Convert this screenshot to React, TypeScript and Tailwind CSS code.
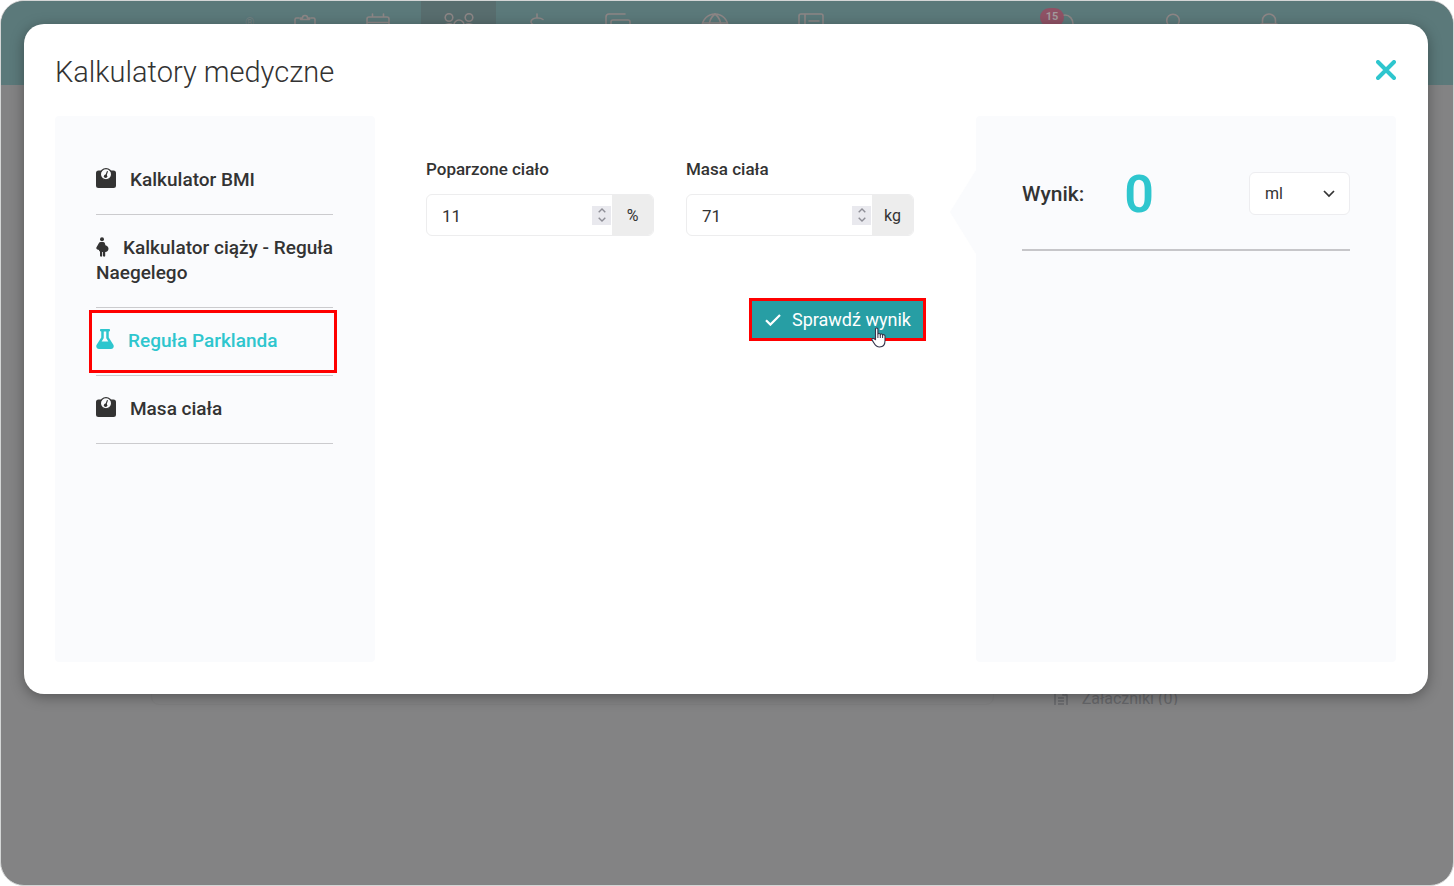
import { useState } from "react";
import type { ReactNode } from "react";
import { FaFlask } from "react-icons/fa";

type Calculator = {
  id: string;
  label: string;
  icon: ReactNode;
};

function ScaleIcon() {
  return (
    <svg viewBox="0 0 20 20" className="mr-[14px] inline size-5 align-[-2px]" aria-hidden="true">
      <path d="M2.500 2.500h15A2.500 2.500 0 0 1 20 5v12.500a2.500 2.500 0 0 1-2.500 2.500h-15A2.500 2.500 0 0 1 0 17.500V5a2.500 2.500 0 0 1 2.500-2.500z" fill="currentColor" />
      <circle cx="10" cy="6.200" r="5.600" fill="#fafbfd" stroke="currentColor" strokeWidth="1.200" />
      <path d="M9.700 8.300 11.300 3.600" stroke="currentColor" strokeWidth="1.200" strokeLinecap="round" />
      <circle cx="9.600" cy="8.300" r="1.700" fill="currentColor" />
    </svg>
  );
}

function PregnancyIcon() {
  return (
    <svg viewBox="0 0 13 20" className="mr-[14px] inline h-5 w-[13px] align-[-3px]" fill="currentColor" aria-hidden="true">
      <circle cx="6" cy="2.200" r="2" />
      <path d="M4.700 5h2.600c1 0 1.500.8 1.700 1.700l.4 1.500c1.700.4 3.100 1.600 3.100 3.400 0 2-1.200 3.400-3.300 3.400v3.800c0 1.200-2.200 1.200-2.200 0V15h-.8v3.800c0 1.200-2.200 1.200-2.200 0V14.500c-.7-.2-1-.8-1-1.500l-1.600-.5C.5 12.200 0 11.400.4 10.500L2.800 6.200C3.200 5.400 3.800 5 4.700 5z" />
    </svg>
  );
}

const calculators: Calculator[] = [
  { id: "bmi", label: "Kalkulator BMI", icon: <ScaleIcon /> },
  { id: "naegele", label: "Kalkulator ciąży - Reguła Naegelego", icon: <PregnancyIcon /> },
  { id: "parkland", label: "Reguła Parklanda", icon: <FaFlask className="mr-[14px] inline h-5 w-[18px] align-[-2px]" /> },
  { id: "mass", label: "Masa ciała", icon: <ScaleIcon /> },
];

function LineIcon({ children }: { children: ReactNode }) {
  return (
    <svg viewBox="0 0 28 28" className="size-7" fill="none" stroke="currentColor" strokeWidth="1.6" strokeLinecap="round" strokeLinejoin="round" aria-hidden="true">
      {children}
    </svg>
  );
}

function NavLink({ label, className, children }: { label: string; className: string; children: ReactNode }) {
  return (
    <a href="#" aria-label={label} className={`flex h-full shrink-0 justify-center pt-[11px] ${className}`}>
      {children}
    </a>
  );
}

function TopBar() {
  return (
    <header className="flex h-[84px] bg-[#5b797a] pl-[240px] text-[#8d8686]">
      <span className="w-[27px] pt-[14px] pl-1 text-xs opacity-50">®</span>
      <NavLink label="Karta" className="w-[74px]">
        <LineIcon>
          <path d="M8 6H5.500A1.500 1.500 0 0 0 4 7.500V25h20V7.500A1.500 1.500 0 0 0 22.500 6H20M9.500 7.500V6h2a2.500 2.500 0 1 1 5 0h2v1.500z" />
        </LineIcon>
      </NavLink>
      <NavLink label="Kalendarz" className="mr-[7px] w-[72px]">
        <LineIcon>
          <path d="M5 5h18a2 2 0 0 1 2 2v18H3V7a2 2 0 0 1 2-2zM3 10.500h22M8.500 2v3M19.500 2v3" />
        </LineIcon>
      </NavLink>
      <NavLink label="Pacjenci" className="w-[75px] bg-[#586d6e]">
        <svg viewBox="0 0 32 28" className="h-7 w-8" fill="none" stroke="currentColor" strokeWidth="1.6" aria-hidden="true">
          <circle cx="6" cy="5.500" r="3.800" />
          <circle cx="26" cy="5.500" r="3.800" />
          <circle cx="16" cy="13" r="5" />
          <path d="M1 14c1-2 6-3 9-1M31 14c-1-2-6-3-9-1" />
        </svg>
      </NavLink>
      <NavLink label="Finanse" className="w-[81px]">
        <LineIcon>
          <path d="M20 7.500c-3-2.500-11-2-12 2-1 5 11 4 12 9 0 4-9 5-13 2M14 2v4M14 22v4" />
        </LineIcon>
      </NavLink>
      <NavLink label="Dokumenty" className="w-[82px]">
        <LineIcon>
          <path d="M2 19V5a3 3 0 0 1 3-3h16M7 22V10a2 2 0 0 1 2-2h15a2 2 0 0 1 2 2v12zM15 13h3" />
        </LineIcon>
      </NavLink>
      <NavLink label="Strona" className="w-[112px]">
        <LineIcon>
          <circle cx="14" cy="15" r="13" />
          <path d="M2 11h24M14 2c-8 6-8 20 0 26M14 2c8 6 8 20 0 26" />
        </LineIcon>
      </NavLink>
      <NavLink label="Baza wiedzy" className="w-20">
        <LineIcon>
          <path d="M4 2h20a2 2 0 0 1 2 2v22H2V4a2 2 0 0 1 2-2zM8 2v24M12 9h10M12 14h10" />
        </LineIcon>
      </NavLink>
      <div className="ml-auto flex h-full pr-[136px]">
        <div className="relative w-[75px]">
          <NavLink label="Powiadomienia" className="w-[75px]">
            <LineIcon>
              <path d="M4 22V12a8 9 0 0 1 16 0v10z" />
            </LineIcon>
          </NavLink>
          <span className="absolute top-[7px] left-[11px] flex h-[19px] w-6 items-center justify-center rounded-full bg-[#8f5265] text-[11px] font-bold text-[#a39b9d]">
            15
          </span>
        </div>
        <NavLink label="Konto" className="ml-[21px] w-24">
          <LineIcon>
            <circle cx="14" cy="8.500" r="6.300" />
            <path d="M3 26a11 9 0 0 1 22 0" />
          </LineIcon>
        </NavLink>
        <NavLink label="Wyloguj" className="w-24">
          <LineIcon>
            <path d="M7.500 12V8.500a6.500 6.500 0 0 1 13 0V12M6 12h16v13H6z" />
          </LineIcon>
        </NavLink>
      </div>
    </header>
  );
}

function NumberField({ id, label, unit, value, onChange }: { id: string; label: string; unit: string; value: number; onChange: (value: number) => void }) {
  return (
    <div>
      <label htmlFor={id} className="block text-[17px] leading-6 font-medium">
        {label}
      </label>
      <div className="mt-[13px] flex h-[42px] items-center overflow-hidden rounded-md border border-[#ededee] bg-white">
        <input
          id={id}
          type="number"
          value={value}
          onChange={(e) => onChange(Number(e.target.value))}
          className="h-full w-0 min-w-0 grow [appearance:textfield] pt-[2px] pl-[15px] text-[17px] outline-none [&::-webkit-inner-spin-button]:appearance-none"
        />
        <div className="flex h-[19px] w-[19px] shrink-0 flex-col bg-[#e9e9ee] text-[#8e8e96]">
          <button type="button" aria-label={`${label} +`} onClick={() => onChange(value + 1)} className="flex flex-1 items-end justify-center pb-[2px]">
            <svg viewBox="0 0 8 5" className="h-[5px] w-2" fill="none" stroke="currentColor" strokeWidth="1.400"><path d="M.7 4.300 4 1l3.300 3.300" /></svg>
          </button>
          <button type="button" aria-label={`${label} -`} onClick={() => onChange(value - 1)} className="flex flex-1 items-start justify-center pt-[2px]">
            <svg viewBox="0 0 8 5" className="h-[5px] w-2" fill="none" stroke="currentColor" strokeWidth="1.400"><path d="M.7.7 4 4 7.300.7" /></svg>
          </button>
        </div>
        <span className="ml-px flex h-full w-[41px] shrink-0 items-center justify-center bg-[#ededed] pt-[2px] text-base">{unit}</span>
      </div>
    </div>
  );
}

function HandCursor() {
  return (
    <svg viewBox="0 0 16 21" className="pointer-events-none absolute top-[26px] left-[119px] h-[21px] w-4" aria-hidden="true">
      <path
        d="M4.500 12.500V2.300c0-1.700 2.400-1.700 2.400 0v4.900c.3-1.100 2.200-1 2.400.3.500-.9 2.200-.7 2.300.6.700-.8 2.400-.4 2.400 1.100v4.600c0 3.400-1.900 6.200-5.400 6.200-3.200 0-4.400-1.700-5.500-3.700L1 12.900c-.7-1.400 1-2.200 2-1.200z"
        fill="#fff"
        stroke="#33334a"
        strokeWidth="1.100"
      />
      <path d="M6.900 7v4M9.300 7.600V11M11.600 8.200V11" stroke="#33334a" strokeWidth="1" />
    </svg>
  );
}

export default function App() {
  const [active, setActive] = useState("parkland");
  const [burned, setBurned] = useState(11);
  const [mass, setMass] = useState(71);
  const [result, setResult] = useState(0);

  return (
    <div className="relative flex min-h-screen flex-col bg-white font-[Roboto,sans-serif] text-[#333]">
      <div className="flex grow flex-col overflow-hidden rounded-[24px] border border-[#d4d6d6] bg-[#838384]">
        <TopBar />
        <div className="flex h-[620px] items-end pr-[275px]">
          <div className="ml-[150px] h-10 grow rounded-lg border border-[#7f7f80]" />
          <div className="ml-[60px] flex h-[18px] items-start gap-[14px] overflow-hidden text-base text-[#67686b]">
            <svg viewBox="0 0 14 18" className="mt-[3px] h-[18px] w-[14px]" fill="none" stroke="currentColor" strokeWidth="1.500" aria-hidden="true">
              <path d="M1 17V1h8l4 4v12zM4 8h6M4 11h6M4 14h6M9 1v4h4" />
            </svg>
            Załaczniki (0)
          </div>
        </div>
      </div>

      <div role="dialog" aria-labelledby="dialog-title" className="absolute top-6 right-[26px] left-6 rounded-[20px] bg-white pr-8 pb-8 pl-[31px] shadow-[0_3px_14px_rgba(0,0,0,0.35)]">
        <div className="flex h-[92px] items-center justify-between">
          <h1 id="dialog-title" className="pt-1 text-[29px] leading-10 font-light">Kalkulatory medyczne</h1>
          <button type="button" aria-label="Zamknij" className="text-[#2ec6ce]">
            <svg viewBox="0 0 20 20" className="size-5" fill="none" stroke="currentColor" strokeWidth="4" strokeLinecap="round">
              <path d="M2 2l16 16M18 2 2 18" />
            </svg>
          </button>
        </div>

        <div className="grid min-h-[546px] grid-cols-[320px_minmax(0,1fr)_420px]">
          <nav className="rounded-sm bg-[#fafbfd] pt-[31px] pr-[42px] pl-[41px]">
            <ul>
              {calculators.map((item) => (
                <li key={item.id} className="relative border-b border-[#cbcbce]">
                  <button
                    type="button"
                    onClick={() => setActive(item.id)}
                    className={`block w-full pt-5 pb-[22px] text-left text-[19px] leading-[25px] font-medium ${item.id === active ? "text-[#2ec6ce]" : "text-[#333]"}`}
                  >
                    {item.icon}
                    {item.label}
                  </button>
                  {item.id === active && <span className="pointer-events-none absolute inset-y-[2px] -right-1 -left-[7px] border-3 border-[#ff0000]" />}
                </li>
              ))}
            </ul>
          </nav>

          <form
            className="pt-[41px] pr-[50px] pl-[51px]"
            onSubmit={(e) => {
              e.preventDefault();
              setResult(4 * burned * mass);
            }}
          >
            <div className="grid grid-cols-2 gap-8 pr-3">
              <NumberField id="burned" label="Poparzone ciało" unit="%" value={burned} onChange={setBurned} />
              <NumberField id="mass" label="Masa ciała" unit="kg" value={mass} onChange={setMass} />
            </div>
            <div className="mt-[62px] flex justify-end">
              <button type="submit" className="relative flex h-[43px] w-[177px] items-center gap-[11px] border-3 border-[#ff0000] bg-[#279ea4] pl-[13px] text-lg text-white">
                <svg viewBox="0 0 16 12" className="h-3 w-4 shrink-0" fill="none" stroke="currentColor" strokeWidth="2.200" aria-hidden="true"><path d="M1 6.200 5.400 10.600 15 1" /></svg>
                Sprawdź wynik
                <HandCursor />
              </button>
            </div>
          </form>

          <section className="relative rounded-sm bg-[#fafbfd] px-[46px] pt-14">
            <svg viewBox="0 0 26 84" className="absolute top-[54px] -left-[26px] h-[84px] w-[26px]" fill="#fafbfd" aria-hidden="true"><path d="M26 0 0 42l26 42z" /></svg>
            <div className="flex h-[79px] items-start border-b-2 border-[#c6c6c9]">
              <div className="flex h-[45px] grow items-center gap-10">
                <span className="text-[21px] font-medium">Wynik:</span>
                <output className="text-[52px] leading-none font-semibold text-[#2ec6ce]">{result}</output>
              </div>
              <div className="relative">
                <select aria-label="Jednostka" className="h-[43px] w-[101px] appearance-none rounded-md border border-[#ededf0] bg-white pl-[15px] text-base">
                  <option>ml</option>
                  <option>l</option>
                </select>
                <svg viewBox="0 0 12 8" className="pointer-events-none absolute top-[18px] right-[15px] h-2 w-3" fill="none" stroke="currentColor" strokeWidth="1.700" aria-hidden="true"><path d="M1 1l5 5 5-5" /></svg>
              </div>
            </div>
          </section>
        </div>
      </div>
    </div>
  );
}
